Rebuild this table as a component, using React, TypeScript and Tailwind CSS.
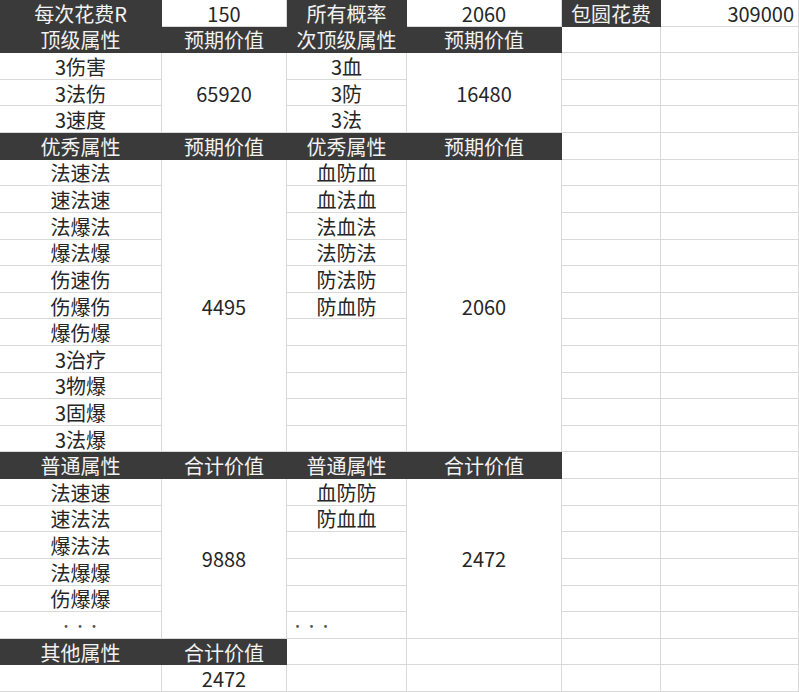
import React from 'react';

type Cell = {
    col: number;
    row: number;
    rowSpan?: number;
    text?: string;
    dark?: boolean;
    align?: 'left' | 'center' | 'right';
};

const colStart = ['', 'col-start-1', 'col-start-2', 'col-start-3', 'col-start-4', 'col-start-5', 'col-start-6'];
const rowStart = [
    '',
    'row-start-1',
    'row-start-2',
    'row-start-3',
    'row-start-4',
    'row-start-5',
    'row-start-6',
    'row-start-7',
    'row-start-8',
    'row-start-9',
    'row-start-10',
    'row-start-11',
    'row-start-12',
    'row-start-13',
    'row-start-14',
    'row-start-15',
    'row-start-16',
    'row-start-17',
    'row-start-18',
    'row-start-19',
    'row-start-20',
    'row-start-21',
    'row-start-22',
    'row-start-23',
    'row-start-24',
    'row-start-25',
    'row-start-26',
];
const rowSpan: Record<number, string> = { 1: 'row-span-1', 3: 'row-span-3', 6: 'row-span-6', 11: 'row-span-11' };

const cells: Cell[] = [];
const add = (c: Cell) => cells.push(c);

// first row: costs
add({ col: 1, row: 1, text: '每次花费R', dark: true });
add({ col: 2, row: 1, text: '150' });
add({ col: 3, row: 1, text: '所有概率', dark: true });
add({ col: 4, row: 1, text: '2060' });
add({ col: 5, row: 1, text: '包圆花费', dark: true });
add({ col: 6, row: 1, text: '309000', align: 'right' });

const header = (row: number, labels: string[]) => {
    labels.forEach((t, i) => add({ col: i + 1, row, text: t, dark: true }));
    add({ col: 5, row });
    add({ col: 6, row });
};

const block = (start: number, left: string[], leftValue: string, right: string[], rightValue: string, rows: number) => {
    for (let i = 0; i < rows; i++) {
        const r = start + i;
        add({ col: 1, row: r, text: left[i] ?? '' });
        const rt = right[i] ?? '';
        add({ col: 3, row: r, text: rt, align: rt === '...' ? 'left' : 'center' });
        add({ col: 5, row: r });
        add({ col: 6, row: r });
    }
    add({ col: 2, row: start, rowSpan: rows, text: leftValue });
    add({ col: 4, row: start, rowSpan: rows, text: rightValue });
};

header(2, ['顶级属性', '预期价值', '次顶级属性', '预期价值']);
block(3, ['3伤害', '3法伤', '3速度'], '65920', ['3血', '3防', '3法'], '16480', 3);

header(6, ['优秀属性', '预期价值', '优秀属性', '预期价值']);
block(
    7,
    ['法速法', '速法速', '法爆法', '爆法爆', '伤速伤', '伤爆伤', '爆伤爆', '3治疗', '3物爆', '3固爆', '3法爆'],
    '4495',
    ['血防血', '血法血', '法血法', '法防法', '防法防', '防血防'],
    '2060',
    11,
);

header(18, ['普通属性', '合计价值', '普通属性', '合计价值']);
block(19, ['法速速', '速法法', '爆法法', '法爆爆', '伤爆爆', '...'], '9888', ['血防防', '防血血', '', '', '', '...'], '2472', 6);

add({ col: 1, row: 25, text: '其他属性', dark: true });
add({ col: 2, row: 25, text: '合计价值', dark: true });
[3, 4, 5, 6].forEach((col) => add({ col, row: 25 }));

add({ col: 1, row: 26 });
add({ col: 2, row: 26, text: '2472' });
[3, 4, 5, 6].forEach((col) => add({ col, row: 26 }));

export default function App() {
    return (
        <div className="grid h-[692px] w-[799px] grid-cols-[162px_125px_120px_155px_99px_138px] grid-rows-[repeat(26,minmax(0,1fr))] overflow-hidden bg-white font-['Noto_Sans_CJK_SC','Noto_Sans',sans-serif] text-[20px] leading-none">
            {cells.map((c, i) => {
                const alignCls =
                    c.align === 'right' ? 'justify-end pr-1' : c.align === 'left' ? 'justify-start pl-1' : 'justify-center';
                const colorCls = c.dark
                    ? 'bg-[#3a3a3a] text-[#f2f2f2] border-[#3a3a3a]'
                    : 'bg-white text-[#262626] border-[#d9d9d9]';
                const isDots = c.text === '...';
                return (
                    <div
                        key={i}
                        className={`flex min-h-0 items-center border-r border-b pt-[2px] ${alignCls} ${colorCls} ${colStart[c.col]} ${rowStart[c.row]} ${rowSpan[c.rowSpan ?? 1]}`}
                    >
                        <span className={isDots ? 'text-[13px] tracking-[1px] text-[#555]' : 'whitespace-nowrap'}>
                            {isDots ? '···' : c.text}
                        </span>
                    </div>
                );
            })}
        </div>
    );
}
